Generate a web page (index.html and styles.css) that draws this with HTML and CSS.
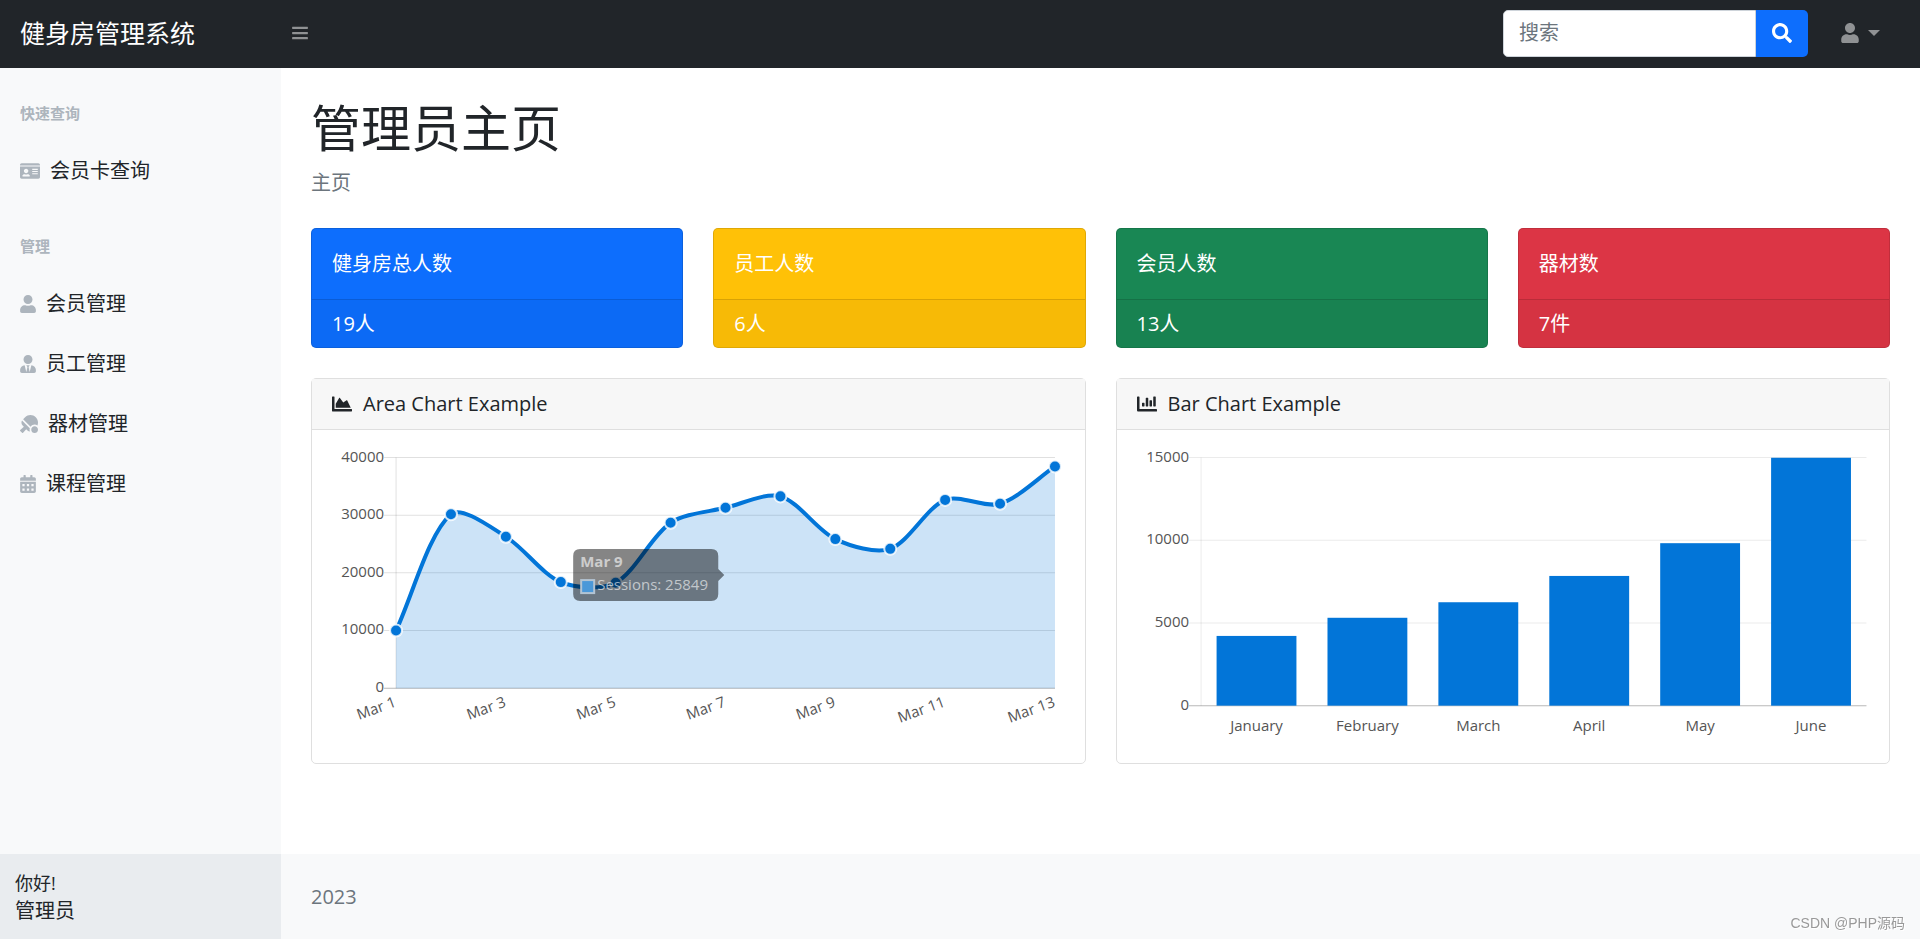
FILE: index.html
```html
<!DOCTYPE html>
<html lang="zh-CN">
<head>
<meta charset="utf-8">
<meta name="viewport" content="width=device-width, initial-scale=1">
<title>健身房管理系统</title>
<link rel="stylesheet" href="styles.css">
</head>
<body>
<header class="topnav">
  <a class="brand" href="#">健身房管理系统</a>
  <button class="toggle" type="button" aria-label="菜单">
    <svg class="icon" width="16" height="18" viewBox="0 0 448 512"><path d="M12 76h424q12 0 12 12v40q0 12-12 12H12q-12 0-12-12V88q0-12 12-12zm0 148h424q12 0 12 12v40q0 12-12 12H12q-12 0-12-12v-40q0-12 12-12zm0 148h424q12 0 12 12v40q0 12-12 12H12q-12 0-12-12v-40q0-12 12-12z"/></svg>
  </button>
  <form class="search">
    <input class="search-input" type="text" placeholder="搜索" aria-label="搜索">
    <button class="search-button" type="button" aria-label="提交搜索">
      <svg class="icon" width="20" height="20" viewBox="0 0 512 512"><path d="M505 442.7L405.3 343c-4.5-4.5-10.6-7-17-7H372c27.6-35.3 44-79.7 44-128C416 93.1 322.9 0 208 0S0 93.1 0 208s93.1 208 208 208c48.3 0 92.7-16.4 128-44v16.3c0 6.4 2.5 12.5 7 17l99.7 99.7c9.4 9.4 24.6 9.4 33.9 0l28.3-28.3c9.4-9.4 9.4-24.6.1-34zM208 336c-70.7 0-128-57.2-128-128 0-70.7 57.2-128 128-128 70.7 0 128 57.2 128 128 0 70.7-57.2 128-128 128z"/></svg>
    </button>
  </form>
  <button class="account" type="button" aria-label="账户">
    <svg class="icon" width="18" height="20" viewBox="0 0 448 512"><path d="M224 256c70.7 0 128-57.3 128-128S294.7 0 224 0 96 57.3 96 128s57.3 128 128 128zm89.6 32h-16.7c-22.2 10.2-46.9 16-72.9 16s-50.6-5.8-72.9-16h-16.7C60.2 288 0 348.2 0 422.4V464c0 26.5 21.5 48 48 48h352c26.5 0 48-21.5 48-48v-41.6c0-74.2-60.2-134.4-134.4-134.4z"/></svg>
    <span class="caret"></span>
  </button>
</header>
<div class="shell">
  <div class="sidebar">
    <nav class="menu">
      <div class="menu-heading">快速查询</div>
      <a class="menu-link" href="#"><svg class="icon" width="20" height="18" viewBox="0 0 576 512"><path fill-rule="evenodd" d="M528 32H48C21.5 32 0 53.5 0 80v16h576V80c0-26.5-21.5-48-48-48zM0 432c0 26.5 21.5 48 48 48h480c26.5 0 48-21.5 48-48V128H0v304zM352 192h160v32H352zM352 256h160v32H352zM352 320h160v32H352zM176 192c35.3 0 64 28.7 64 64s-28.7 64-64 64-64-28.7-64-64 28.7-64 64-64zM67.1 396.2C75.5 370.5 99.6 352 128 352h8.2c12.3 5.1 25.7 8 39.8 8s27.6-2.9 39.8-8h8.2c28.4 0 52.5 18.5 60.9 44.2 3.2 9.9-5.2 19.8-15.6 19.8H82.7c-10.4 0-18.8-10-15.6-19.8z"/></svg>会员卡查询</a>
      <div class="menu-heading">管理</div>
      <a class="menu-link" href="#"><svg class="icon" width="16" height="18" viewBox="0 0 448 512"><path d="M224 256c70.7 0 128-57.3 128-128S294.7 0 224 0 96 57.3 96 128s57.3 128 128 128zm89.6 32h-16.7c-22.2 10.2-46.9 16-72.9 16s-50.6-5.8-72.9-16h-16.7C60.2 288 0 348.2 0 422.4V464c0 26.5 21.5 48 48 48h352c26.5 0 48-21.5 48-48v-41.6c0-74.2-60.2-134.4-134.4-134.4z"/></svg>会员管理</a>
      <a class="menu-link" href="#"><svg class="icon" width="16" height="18" viewBox="0 0 448 512"><path d="M224 256c70.7 0 128-57.3 128-128S294.7 0 224 0 96 57.3 96 128s57.3 128 128 128zm95.8 32.6L272 480l-32-136 32-56h-96l32 56-32 136-47.8-191.4C56.9 292 0 350.3 0 422.4V464c0 26.5 21.5 48 48 48h352c26.5 0 48-21.5 48-48v-41.6c0-72.1-56.9-130.4-128.2-133.8z"/></svg>员工管理</a>
      <a class="menu-link" href="#"><svg class="icon" width="18" height="18" viewBox="0 0 512 512"><path d="M496.2 296.5C527.7 218.7 512 126.2 449 63.1 365.1-21 229-21 145.1 63.1l-56 56.1 211.5 211.5c46.1-62.1 131.5-77.4 195.6-34.2zm-217.9 79.7L57.9 155.9c-27.3 45.3-21.7 105 17.3 144.1l34.5 34.6L6.7 424c-8.6 7.5-9.1 20.7-1 28.8l53.4 53.5c8 8.1 21.2 7.6 28.7-1L177.1 402l35.7 35.7c19.7 19.7 44.6 30.5 70.3 33.3-7.1-17-11-35.6-11-55.1-.1-13.8 2.5-27 6.2-39.7zM416 320c-53 0-96 43-96 96s43 96 96 96 96-43 96-96-43-96-96-96z"/></svg>器材管理</a>
      <a class="menu-link" href="#"><svg class="icon" width="16" height="18" viewBox="0 0 448 512"><path fill-rule="evenodd" d="M448 112c0-26.500-21.500-48-48-48h-48V16c0-8.800-7.200-16-16-16h-32c-8.800 0-16 7.200-16 16v48H160V16c0-8.800-7.200-16-16-16h-32c-8.800 0-16 7.200-16 16v48H48C21.500 64 0 85.500 0 112v48h448zM0 464c0 26.500 21.500 48 48 48h352c26.500 0 48-21.500 48-48V192H0zM64 256h64v64H64zM192 256h64v64h-64zM320 256h64v64h-64zM64 384h64v64H64zM192 384h64v64h-64zM320 384h64v64h-64z"/></svg>课程管理</a>
    </nav>
    <div class="greeting">
      <div class="greeting-hello">你好!</div>
      <div class="greeting-name">管理员</div>
    </div>
  </div>
  <div class="content">
    <main class="main">
      <h1 class="title">管理员主页</h1>
      <p class="crumb">主页</p>
      <section class="stats">
        <article class="stat stat-blue"><div class="stat-name">健身房总人数</div><div class="stat-value">19人</div></article>
        <article class="stat stat-yellow"><div class="stat-name">员工人数</div><div class="stat-value">6人</div></article>
        <article class="stat stat-green"><div class="stat-name">会员人数</div><div class="stat-value">13人</div></article>
        <article class="stat stat-red"><div class="stat-name">器材数</div><div class="stat-value">7件</div></article>
      </section>
      <section class="charts">
        <article class="card">
          <h2 class="card-header"><svg class="icon" width="20" height="20" viewBox="0 0 512 512"><path d="M500 384c6.600 0 12 5.400 12 12v40c0 6.600-5.400 12-12 12H12c-6.600 0-12-5.400-12-12V76c0-6.600 5.400-12 12-12h40c6.600 0 12 5.400 12 12v308h436zM372.700 159.500L288 216l-85.300-113.700c-5.100-6.800-15.500-6.300-19.900 1L96 248v104h384l-89.900-187.800c-3.200-6.500-11.400-8.700-17.400-4.700z"/></svg>Area Chart Example</h2>
          <div class="card-body"><svg id="area-chart" class="chart" viewBox="0 0 732 293" role="img" aria-label="Area Chart Example"></svg></div>
        </article>
        <article class="card">
          <h2 class="card-header"><svg class="icon" width="20" height="20" viewBox="0 0 512 512"><path d="M332.800 320h38.400c6.400 0 12.800-6.400 12.800-12.800V172.800c0-6.400-6.400-12.800-12.800-12.800h-38.400c-6.400 0-12.800 6.400-12.800 12.800v134.400c0 6.400 6.400 12.800 12.800 12.800zm96 0h38.400c6.400 0 12.800-6.400 12.800-12.800V76.800c0-6.400-6.400-12.800-12.800-12.800h-38.400c-6.400 0-12.800 6.400-12.800 12.800v230.400c0 6.400 6.400 12.800 12.800 12.800zm-288 0h38.400c6.400 0 12.800-6.400 12.800-12.800v-70.400c0-6.400-6.400-12.800-12.800-12.800h-38.400c-6.400 0-12.800 6.400-12.800 12.800v70.400c0 6.400 6.400 12.800 12.800 12.800zm96 0h38.400c6.400 0 12.800-6.400 12.800-12.800V108.800c0-6.400-6.400-12.800-12.800-12.800h-38.400c-6.400 0-12.800 6.400-12.800 12.800v198.400c0 6.400 6.400 12.800 12.800 12.800zM496 384H64V80c0-8.800-7.200-16-16-16H16C7.200 64 0 71.200 0 80v336c0 17.700 14.300 32 32 32h464c8.800 0 16-7.200 16-16v-32c0-8.800-7.200-16-16-16z"/></svg>Bar Chart Example</h2>
          <div class="card-body"><svg id="bar-chart" class="chart" viewBox="0 0 732 293" role="img" aria-label="Bar Chart Example"></svg></div>
        </article>
      </section>
    </main>
    <footer class="footer">2023</footer>
  </div>
</div>
<div class="watermark">CSDN @PHP源码</div>
<script src="script.js"></script>
</body>
</html>
```
FILE: styles.css
```css
* {
  box-sizing: border-box;
}

body {
  margin: 0;
  min-height: 100vh;
  display: flex;
  flex-direction: column;
  font-family: "Open Sans", "Noto Sans", "Noto Sans CJK SC", sans-serif;
  font-size: 20px;
  line-height: 30px;
  color: #212529;
  background: #fff;
}

a {
  color: inherit;
  text-decoration: none;
}

button,
input {
  font: inherit;
}

.icon {
  display: block;
  flex: none;
  fill: currentColor;
}

.topnav {
  display: flex;
  align-items: center;
  height: 68px;
  padding: 0 30px 2px 0;
  background: #212529;
}

.brand {
  width: 282px;
  padding-left: 20px;
  font-size: 25px;
  color: #fff;
}

.toggle,
.account {
  display: flex;
  align-items: center;
  gap: 9px;
  height: 48px;
  padding: 0 10px;
  border: 0;
  background: none;
  color: #909294;
}

.search {
  display: flex;
  width: 305px;
  height: 47px;
  margin-left: auto;
  margin-right: 23px;
}

.search-input {
  flex: 1;
  min-width: 0;
  padding: 0 15px;
  border: 1px solid #ced4da;
  border-radius: 5px 0 0 5px;
  background: #fff;
}

.search-input::placeholder {
  color: #6c757d;
  opacity: 1;
}

.search-button {
  display: flex;
  align-items: center;
  justify-content: center;
  width: 52px;
  padding: 0;
  border: 0;
  border-radius: 0 5px 5px 0;
  background: #0d6efd;
  color: #fff;
}

.caret {
  border: 6px solid transparent;
  border-top-color: currentColor;
  border-bottom: 0;
}

.shell {
  flex: 1;
  display: flex;
}

.sidebar {
  flex: none;
  display: flex;
  flex-direction: column;
  justify-content: space-between;
  width: 281px;
  background: #f8f9fa;
}

.menu-heading {
  padding: 34px 20px 17px;
  font-size: 15px;
  font-weight: 700;
  line-height: 22px;
  color: #adb5bd;
}

.menu-link {
  display: flex;
  align-items: center;
  gap: 10px;
  padding: 15px 20px;
}

.menu-link .icon {
  color: #adb5bd;
}

.greeting {
  height: 85px;
  padding: 15px;
  background: #e9ecef;
}

.greeting-hello {
  font-size: 18px;
  line-height: 28px;
}

.greeting-name {
  line-height: 28px;
}

.content {
  flex: 1;
  min-width: 0;
  display: flex;
  flex-direction: column;
  justify-content: space-between;
}

.main {
  padding: 30px;
}

.title {
  margin: 0 0 10px;
  font-size: 50px;
  font-weight: 400;
  line-height: 60px;
}

.crumb {
  margin: 0 0 30px;
  color: #6c757d;
}

.stats {
  display: grid;
  grid-template-columns: repeat(4, 1fr);
  gap: 30px;
  margin-bottom: 30px;
}

.stat {
  border: 1px solid rgba(0, 0, 0, 0.125);
  border-radius: 5px;
  color: #fff;
}

.stat-name {
  padding: 20px;
}

.stat-value {
  padding: 9px 20px 8px;
  border-top: 1px solid rgba(0, 0, 0, 0.125);
  background: rgba(0, 0, 0, 0.03);
}

.stat-blue {
  background-color: #0d6efd;
}

.stat-yellow {
  background-color: #ffc107;
}

.stat-green {
  background-color: #198754;
}

.stat-red {
  background-color: #dc3545;
}

.charts {
  display: grid;
  grid-template-columns: repeat(2, 1fr);
  gap: 30px;
}

.card {
  min-width: 0;
  border: 1px solid #dfdfdf;
  border-radius: 5px;
}

.card-header {
  display: flex;
  align-items: center;
  gap: 11px;
  margin: 0;
  padding: 10px 20px;
  border-bottom: 1px solid #dfdfdf;
  font-size: 20px;
  font-weight: 400;
  background: #f7f7f7;
}

.card-body {
  padding: 20px;
}

.chart {
  display: block;
  width: 100%;
  overflow: visible;
  font-size: 15px;
  fill: #555;
}

.grid {
  stroke: #000;
  stroke-opacity: 0.12;
}

.grid-light {
  stroke: #000;
  stroke-opacity: 0.08;
}

.baseline {
  stroke: #000;
  stroke-opacity: 0.28;
}

.area {
  fill: rgba(2, 117, 216, 0.2);
}

.curve {
  fill: none;
  stroke: #0275d8;
  stroke-width: 4;
}

.point {
  fill: #0275d8;
  stroke: rgba(255, 255, 255, 0.8);
  stroke-width: 2;
}

.bar {
  fill: #0275d8;
}

.tooltip-box {
  fill: rgba(0, 0, 0, 0.48);
}

.tooltip-text {
  fill: #fff;
  fill-opacity: 0.6;
}

.tooltip-title {
  font-weight: 700;
}

.tooltip-swatch {
  fill: #4b98d8;
  stroke: #b3c4d3;
  stroke-width: 2;
}

.footer {
  display: flex;
  align-items: center;
  height: 85px;
  padding: 0 30px;
  color: #6c757d;
  background: #f8f9fa;
}

.watermark {
  position: fixed;
  right: 15px;
  bottom: 6px;
  font-family: "Liberation Sans", "Noto Sans CJK SC", sans-serif;
  font-size: 14px;
  line-height: 20px;
  color: #999;
  text-shadow: 1px 1px 0 #fff;
}
```
FILE: script.js
```js
const SVG = "http://www.w3.org/2000/svg";

function add(parent, tag, attrs, text) {
  const el = document.createElementNS(SVG, tag);
  for (const key in attrs) el.setAttribute(key, attrs[key]);
  if (text !== undefined) el.textContent = text;
  parent.appendChild(el);
  return el;
}

function drawAxis(svg, box, max, step, gridClass) {
  for (let v = 0; v <= max; v += step) {
    const y = box.bottom - (v / max) * (box.bottom - box.top);
    add(svg, "line", { x1: box.left - 12, x2: box.right, y1: y, y2: y, class: v ? gridClass : "baseline" });
    add(svg, "text", { x: box.left - 12, y: y + 4, "text-anchor": "end" }, v);
  }
  add(svg, "line", { x1: box.left, x2: box.left, y1: box.top, y2: box.bottom, class: gridClass });
}

function splinePath(points, tension, box) {
  const clamp = y => Math.max(box.top, Math.min(box.bottom, y));
  const controls = points.map((p, i) => {
    const a = points[i - 1] || p;
    const b = points[i + 1] || p;
    const d1 = Math.hypot(p.x - a.x, p.y - a.y);
    const d2 = Math.hypot(b.x - p.x, b.y - p.y);
    const f1 = (tension * d1) / (d1 + d2);
    const f2 = (tension * d2) / (d1 + d2);
    return {
      before: [p.x - f1 * (b.x - a.x), clamp(p.y - f1 * (b.y - a.y))],
      after: [p.x + f2 * (b.x - a.x), clamp(p.y + f2 * (b.y - a.y))]
    };
  });
  let d = `M${points[0].x} ${points[0].y}`;
  for (let i = 1; i < points.length; i++) {
    d += `C${controls[i - 1].after} ${controls[i].before} ${points[i].x} ${points[i].y}`;
  }
  return d;
}

function drawArea() {
  const svg = document.getElementById("area-chart");
  const data = [10000, 30162, 26263, 18394, 18287, 28682, 31274, 33259, 25849, 24159, 32651, 31984, 38451];
  const box = { left: 64, right: 722.5, top: 7.5, bottom: 238 };
  const gap = (box.right - box.left) / (data.length - 1);
  const points = data.map((v, i) => ({
    x: box.left + i * gap,
    y: box.bottom - (v / 40000) * (box.bottom - box.top)
  }));
  drawAxis(svg, box, 40000, 10000, "grid");
  const curve = splinePath(points, 0.3, box);
  add(svg, "path", { class: "area", d: `${curve}V${box.bottom}H${box.left}Z` });
  add(svg, "path", { class: "curve", d: curve });
  points.forEach((p, i) => {
    add(svg, "circle", { class: "point", cx: p.x, cy: p.y, r: 6 });
    if (i % 2 === 0) {
      add(svg, "text", { "text-anchor": "end", transform: `translate(${p.x + 1} 256) rotate(-20)` }, `Mar ${i + 1}`);
    }
  });
  add(svg, "path", {
    class: "tooltip-box",
    d: "M248 99H379Q386 99 386 106V119L392 125L386 131V144Q386 151 379 151H248Q241 151 241 144V106Q241 99 248 99Z"
  });
  add(svg, "text", { class: "tooltip-text tooltip-title", x: 248, y: 117 }, "Mar 9");
  add(svg, "rect", { class: "tooltip-swatch", x: 249, y: 130, width: 13, height: 13 });
  add(svg, "text", { class: "tooltip-text", x: 265, y: 140 }, "Sessions: 25849");
}

function drawBars() {
  const svg = document.getElementById("bar-chart");
  const months = ["January", "February", "March", "April", "May", "June"];
  const data = [4215, 5312, 6251, 7841, 9821, 14984];
  const box = { left: 64, right: 729, top: 7.5, bottom: 255.5 };
  const slot = (box.right - box.left) / data.length;
  drawAxis(svg, box, 15000, 5000, "grid-light");
  data.forEach((v, i) => {
    const height = (v / 15000) * (box.bottom - box.top);
    add(svg, "rect", {
      class: "bar", x: box.left + slot * (i + 0.14), y: box.bottom - height, width: slot * 0.72, height
    });
    add(svg, "text", { x: box.left + slot * (i + 0.5), y: 281, "text-anchor": "middle" }, months[i]);
  });
}

drawArea();
drawBars();
```
